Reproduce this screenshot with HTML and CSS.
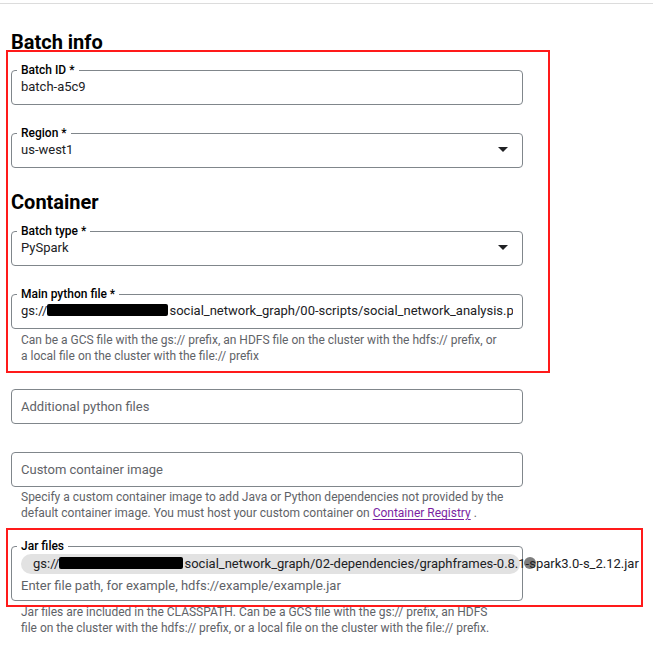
FILE: index.html
```html
<!DOCTYPE html>
<html lang="en">
<head>
<meta charset="utf-8">
<title>Batch info</title>
<link rel="stylesheet" href="styles.css">
</head>
<body>
<div class="topbar"></div>
<main class="form">
  <h2 class="heading heading-first">Batch info</h2>
  <fieldset class="field">
    <legend class="label">Batch ID *</legend>
    <div class="value">batch-a5c9</div>
  </fieldset>
  <fieldset class="field">
    <legend class="label">Region *</legend>
    <div class="value select">
      <span>us-west1</span>
      <svg class="arrow" viewBox="7 10 10 5" width="10" height="5"><path d="M7 10l5 5 5-5z" fill="#202124"/></svg>
    </div>
  </fieldset>

  <h2 class="heading heading-second">Container</h2>
  <fieldset class="field">
    <legend class="label">Batch type *</legend>
    <div class="value select">
      <span>PySpark</span>
      <svg class="arrow" viewBox="7 10 10 5" width="10" height="5"><path d="M7 10l5 5 5-5z" fill="#202124"/></svg>
    </div>
  </fieldset>
  <fieldset class="field field-last">
    <legend class="label">Main python file *</legend>
    <div class="value clip">gs://<span class="redact redact-main"></span>social_network_graph/00-scripts/social_network_analysis.py</div>
  </fieldset>
  <p class="hint hint-main">Can be a GCS file with the gs:// prefix, an HDFS file on the cluster with the hdfs:// prefix, or<br>a local file on the cluster with the file:// prefix</p>

  <div class="box box-add"><span class="placeholder">Additional python files</span></div>
  <div class="box box-custom"><span class="placeholder">Custom container image</span></div>
  <p class="hint hint-custom">Specify a custom container image to add Java or Python dependencies not provided by the<br>default container image. You must host your custom container on <a class="link" href="#">Container Registry</a> .</p>

  <fieldset class="field field-jar">
    <legend class="label">Jar files</legend>
    <div class="chip-row">
      <div class="chip"><span class="chip-text">gs://<span class="redact redact-jar"></span>social_network_graph/02-dependencies/graphframes-0.8.1-spark3.0-s_2.12.jar</span></div>
      <span class="chip-remove"></span>
    </div>
    <div class="value placeholder">Enter file path, for example, hdfs://example/example.jar</div>
  </fieldset>
  <p class="hint hint-jar">Jar files are included in the CLASSPATH. Can be a GCS file with the gs:// prefix, an HDFS<br>file on the cluster with the hdfs:// prefix, or a local file on the cluster with the file:// prefix.</p>
</main>
<div class="annot annot-one"></div>
<div class="annot annot-two"></div>
</body>
</html>
```
FILE: styles.css
```css
* { box-sizing: border-box; }
html, body { margin: 0; padding: 0; background: #fff; }
body {
  font-family: Roboto, "Liberation Sans", Arial, sans-serif;
  color: #202124;
  position: relative;
  width: 653px;
  height: 650px;
  overflow: hidden;
}
.topbar {
  height: 4px;
  border-bottom: 1px solid #dcdcdc;
}
.form {
  display: flex;
  flex-direction: column;
  width: 523px;
  padding-left: 11px;
}
.heading {
  margin: 0;
  font-size: 20px;
  line-height: 24px;
  font-weight: 700;
  color: #000;
}
.heading-first { margin: 26px 0 9px; }
.heading-second { margin: 1px 0 10px; }

.field {
  margin: 0 0 21px;
  padding: 0 9px 7px 5px;
  border: 1px solid #80868b;
  border-radius: 4px;
  min-width: 0;
}
.field-last { margin-bottom: 0; }
.label {
  padding: 0 4px;
  font-size: 12px;
  line-height: 14px;
  font-weight: 500;
  color: #000;
}
.value {
  margin-left: 4px;
  font-size: 13px;
  line-height: 20px;
  white-space: nowrap;
  color: #202124;
}
.clip { overflow: hidden; }
.select {
  display: flex;
  align-items: center;
  justify-content: space-between;
}
.arrow {
  margin-right: 5px;
  margin-top: -1px;
}
.redact {
  display: inline-block;
  height: 12px;
  background: #000;
  border-radius: 2px;
  vertical-align: -1px;
}
.redact-main { width: 121px; margin: 0 1px 0 0; }
.redact-jar { width: 124px; margin: 0 1px 0 0; }

.hint {
  margin: 3px 0 0;
  padding-left: 10px;
  font-size: 12px;
  line-height: 16px;
  color: #5f6368;
}
.hint-custom { margin-top: 2px; }
.link {
  color: #7b1fa2;
  text-decoration: underline;
  text-underline-offset: 2px;
}

.box {
  height: 35px;
  border: 1px solid #80868b;
  border-radius: 4px;
  padding-left: 9px;
  display: flex;
  align-items: center;
}
.box-add { margin-top: 25px; }
.box-custom { margin-top: 28px; }
.placeholder { color: #5f6368; font-size: 13px; }

.field-jar { margin-top: 18px; margin-bottom: 0; padding-right: 1px; padding-bottom: 4px; }
.chip-row {
  position: relative;
  margin: 1px 0 2px 4px;
  height: 20px;
  width: 499px;
}
.chip {
  height: 20px;
  width: 499px;
  border-radius: 10px;
  background: #e2e2e2;
  padding-left: 12px;
  white-space: nowrap;
  font-size: 13px;
  line-height: 20px;
  overflow: visible;
}
.chip-text { position: relative; z-index: 1; color: #202124; }
.chip-remove {
  position: absolute;
  left: 503px;
  top: 3px;
  width: 12px;
  height: 12px;
  border-radius: 50%;
  background: #7d7d7d;
  z-index: 0;
}

.annot {
  position: absolute;
  border: 2px solid #ff1a1a;
  pointer-events: none;
}
.annot-one { left: 6px; top: 50px; width: 544px; height: 323px; }
.annot-two { left: 6px; top: 528px; width: 637px; height: 79px; }
```
